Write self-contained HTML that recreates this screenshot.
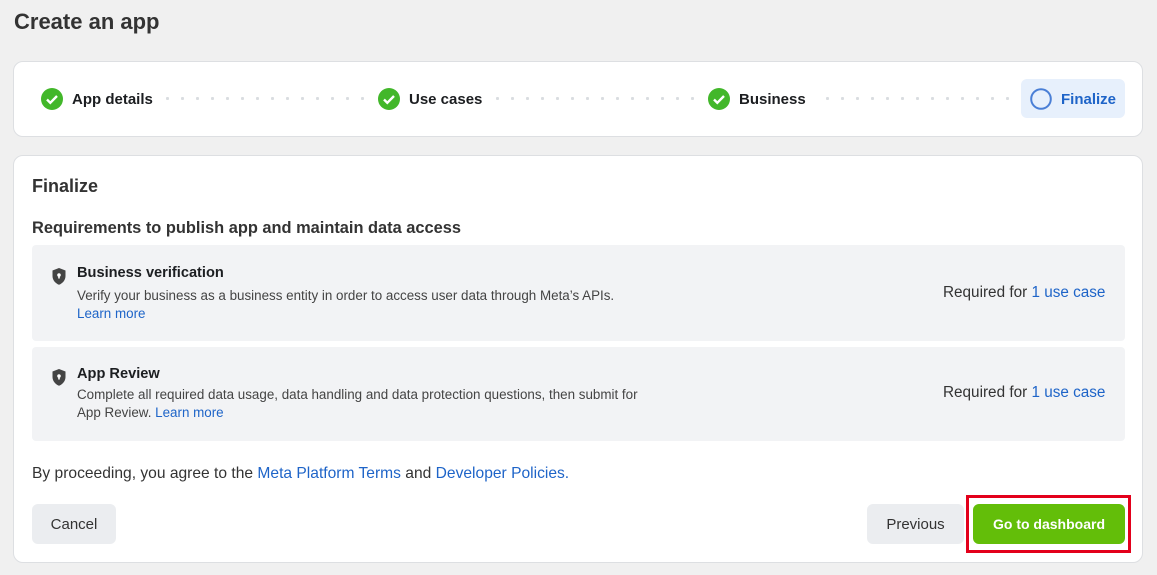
<!DOCTYPE html>
<html><head><style>
*{margin:0;padding:0;box-sizing:border-box}
body{width:1157px;height:575px;background:#f0f0f0;font-family:"Liberation Sans",Arial,sans-serif;color:#1c1e21;position:relative;overflow:hidden}
.a{position:absolute}
h1{position:absolute;left:14px;top:9px;font-size:22px;font-weight:bold;color:#333}
.card{position:absolute;left:13px;width:1130px;background:#fff;border:1px solid #dddfe2;border-radius:10px}
.step{position:absolute;top:88px;display:flex;align-items:center;font-size:15px;font-weight:bold;color:#1c1e21}
.step svg{margin-right:9px}
.dots{position:absolute;top:97px;height:3px;background:radial-gradient(circle,#dadde1 1.5px,transparent 1.7px) 0 0/15px 3px repeat-x}
.box{position:absolute;left:32px;width:1093px;background:#f2f3f5;border-radius:4px}
.bt{position:absolute;font-size:14.6px;font-weight:bold}
.bd{position:absolute;font-size:13.4px;color:#444;line-height:18px}
.lk{color:#1e64c8}
.req{position:absolute;font-size:15.3px;color:#333}
.btn{position:absolute;top:504px;height:40px;border-radius:6px;font-size:15px;display:flex;align-items:center;justify-content:center}
</style></head><body>
<h1>Create an app</h1>
<div class="card" style="top:61px;height:76px"></div>
<div class="step" style="left:41px"><svg width="22" height="22"><circle cx="11" cy="11" r="11" fill="#42b72a"/><path d="M6 11.5l3.3 3.3L16 8" stroke="#fff" stroke-width="2.4" fill="none"/></svg>App details</div>
<div class="dots" style="left:160px;width:210px"></div>
<div class="step" style="left:378px"><svg width="22" height="22"><circle cx="11" cy="11" r="11" fill="#42b72a"/><path d="M6 11.5l3.3 3.3L16 8" stroke="#fff" stroke-width="2.4" fill="none"/></svg>Use cases</div>
<div class="dots" style="left:490px;width:210px"></div>
<div class="step" style="left:708px"><svg width="22" height="22"><circle cx="11" cy="11" r="11" fill="#42b72a"/><path d="M6 11.5l3.3 3.3L16 8" stroke="#fff" stroke-width="2.4" fill="none"/></svg>Business</div>
<div class="dots" style="left:820px;width:200px"></div>
<div class="a" style="left:1021px;top:79px;width:104px;height:39px;background:#e7f0fc;border-radius:6px"></div>
<div class="step" style="left:1030px;color:#1e64c8"><svg width="22" height="22"><circle cx="11" cy="11" r="9.8" fill="none" stroke="#4a7fd6" stroke-width="2"/></svg>Finalize</div>

<div class="card" style="top:155px;height:408px"></div>
<div class="a" style="left:32px;top:176px;font-size:18px;font-weight:bold;color:#333">Finalize</div>
<div class="a" style="left:32px;top:219px;font-size:16.4px;font-weight:bold;color:#333">Requirements to publish app and maintain data access</div>

<div class="box" style="top:245px;height:96px"></div>
<svg class="a" style="left:51px;top:267px" width="16" height="19"><path d="M8 1L1.5 3.5V9c0 4.2 3 7.4 6.5 8.8 3.5-1.4 6.5-4.6 6.5-8.8V3.5z" fill="#444"/><circle cx="8" cy="8" r="1.8" fill="#fff"/><rect x="7.2" y="8" width="1.6" height="3.5" fill="#fff"/></svg>
<div class="bt" style="left:77px;top:265px">Business verification</div>
<div class="bd" style="left:77px;top:287px">Verify your business as a business entity in order to access user data through Meta’s APIs.<br><span class="lk">Learn more</span></div>
<div class="req" style="left:943px;top:284px">Required for <span class="lk">1 use case</span></div>

<div class="box" style="top:347px;height:94px"></div>
<svg class="a" style="left:51px;top:368px" width="16" height="19"><path d="M8 1L1.5 3.5V9c0 4.2 3 7.4 6.5 8.8 3.5-1.4 6.5-4.6 6.5-8.8V3.5z" fill="#444"/><circle cx="8" cy="8" r="1.8" fill="#fff"/><rect x="7.2" y="8" width="1.6" height="3.5" fill="#fff"/></svg>
<div class="bt" style="left:77px;top:366px">App Review</div>
<div class="bd" style="left:77px;top:386px">Complete all required data usage, data handling and data protection questions, then submit for<br>App Review. <span class="lk">Learn more</span></div>
<div class="req" style="left:943px;top:384px">Required for <span class="lk">1 use case</span></div>

<div class="a" style="left:32px;top:465px;font-size:15.6px;color:#333">By proceeding, you agree to the <span class="lk">Meta Platform Terms</span> and <span class="lk">Developer Policies.</span></div>

<div class="btn" style="left:32px;width:84px;background:#ebedf0;color:#333">Cancel</div>
<div class="btn" style="left:867px;width:97px;background:#ebedf0;color:#333">Previous</div>
<div class="a" style="left:966px;top:495px;width:165px;height:58px;border:3px solid #e3001b"></div>
<div class="btn" style="left:973px;width:152px;background:#63be09;color:#fff;font-weight:bold;font-size:14px">Go to dashboard</div>
</body></html>
